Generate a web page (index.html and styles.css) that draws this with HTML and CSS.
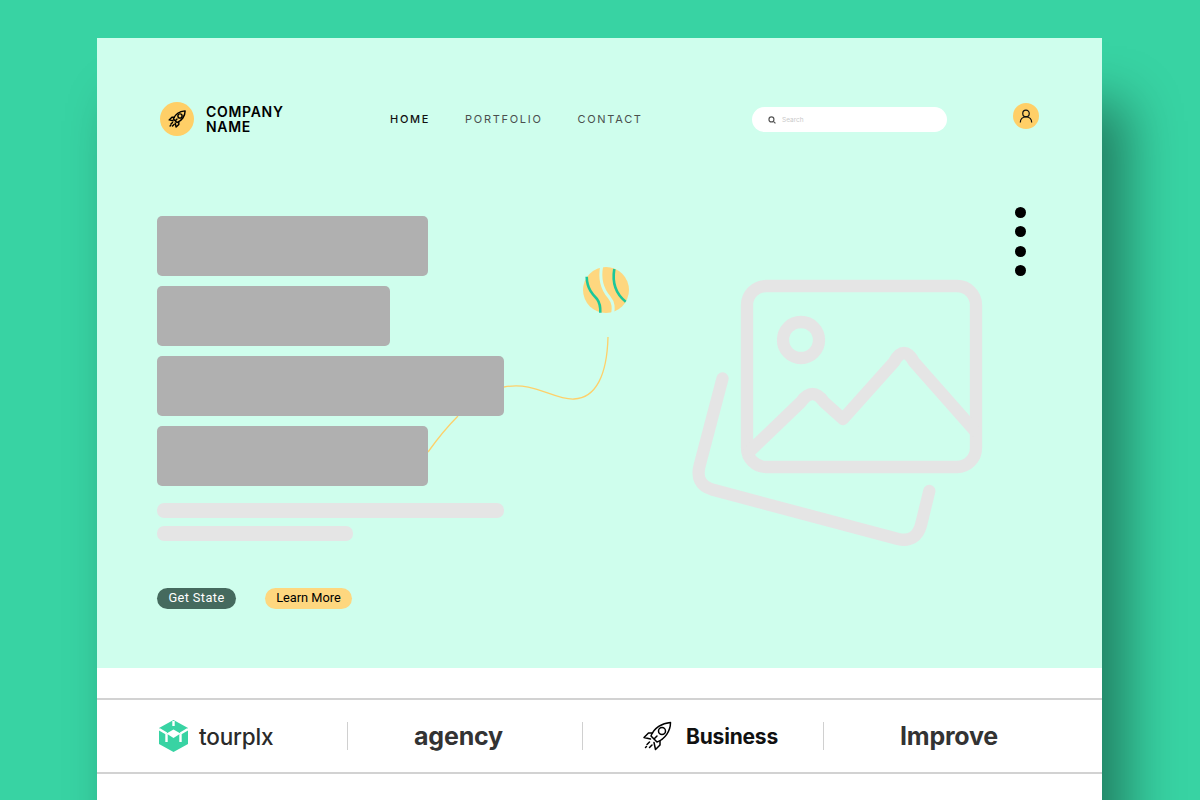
FILE: index.html
```html
<!DOCTYPE html>
<html lang="en">
<head>
    <meta charset="UTF-8">
    <title>Company Name</title>
    <link rel="stylesheet" href="styles.css">
</head>
<body>
    <svg class="defs" width="0" height="0">
        <symbol id="rocket" viewBox="0 0 30 30">
            <path d="M9 15C12 7 20 2 28.500 1.500C28.500 10 23 18 15 21Z"/>
            <circle cx="20" cy="10" r="3.500"/>
            <path d="M10.500 12H6.500L2 16.500L8.500 18M18 20V24L13.500 28.500L12 21.500M12.500 17.500L15 15M7.500 21L5 23.500M10 24L7.500 26.500M4.500 25.500L3.500 26.500"/>
        </symbol>
    </svg>

    <div class="sheet">
        <section class="hero">
            <!-- line art behind the content, drawn in page coordinates -->
            <svg class="art" viewBox="97 38 1005 630">
                <g class="photo">
                    <rect x="747" y="286" width="229" height="181" rx="19"/>
                    <circle cx="801" cy="340" r="18"/>
                    <path d="M749 452L801 402Q812.500 386 824 402L843 419L894 362Q904 344 914 362L975 431"/>
                    <path d="M722.500 378.500L699.500 466Q695 484 712 489.500L898 539Q916 543 921 525L929.300 491"/>
                </g>
                <g class="wire">
                    <path d="M504 387C535 381 553 400 574 399C596 398 607 375 608 337"/>
                    <path d="M458 416C447 427 438 438 428 452"/>
                </g>
                <circle class="ball" cx="606" cy="290" r="23"/>
                <path class="ball-gap" d="M601.700 266C599 280 603 290 609 297C614 303 613.500 308 612.700 314"/>
                <path class="ball-line" d="M586.700 276.700C587 289 593 295 597 299C600 303 600.500 308 600.300 312.700M614.300 269C612 283 616 294 625.700 301.700"/>
            </svg>

            <header class="topbar">
                <div class="brand">
                    <span class="brand-icon"><svg class="rocket" width="18" height="18"><use href="#rocket"/></svg></span>
                    <span class="brand-name">COMPANY<br>NAME</span>
                </div>
                <nav class="menu">
                    <a class="active" href="#">HOME</a>
                    <a href="#">PORTFOLIO</a>
                    <a href="#">CONTACT</a>
                </nav>
                <div class="search">
                    <svg width="8" height="8" viewBox="0 0 10 10"><circle cx="4.300" cy="4.300" r="3.100"/><path d="M6.700 6.700L9.300 9.300"/></svg>
                    <span>Search</span>
                </div>
                <span class="avatar">
                    <svg width="14" height="14" viewBox="0 0 16 16"><circle cx="8" cy="5" r="3.700"/><path d="M1.500 15.500C1.500 11.500 4 9 8 9S14.500 11.500 14.500 15.500"/></svg>
                </span>
            </header>

            <div class="dots"><i></i><i></i><i></i><i></i></div>

            <div class="blocks">
                <div class="block w271"></div>
                <div class="block w233"></div>
                <div class="block w347"></div>
                <div class="block w271"></div>
            </div>
            <div class="lines">
                <div class="line w347"></div>
                <div class="line w196"></div>
            </div>
            <div class="actions">
                <a class="btn btn-dark" href="#">Get State</a>
                <a class="btn btn-yellow" href="#">Learn More</a>
            </div>
        </section>

        <section class="partners">
            <div class="partner first">
                <svg width="29" height="32" viewBox="0 0 29 32">
                    <path class="hex" d="M14.500 0L29 8V24L14.500 32L0 24V8Z"/>
                    <path class="hex-fill" d="M14.500 9.500L21.500 13.500L14.500 18L7.500 13.500Z"/>
                    <path class="hex-cut" d="M0 9L7.500 13.500M29 9L21.500 13.500M7.500 13.500V22M21.500 13.500V22M14.500 1V6"/>
                </svg>
                <span class="tourplx">tourplx</span>
            </div>
            <div class="partner second"><span class="word">agency</span></div>
            <div class="partner third">
                <svg class="rocket rocket-big" width="30" height="30"><use href="#rocket"/></svg>
                <span class="word black">Business</span>
            </div>
            <div class="partner fourth"><span class="word">Improve</span></div>
        </section>
    </div>
</body>
</html>
```

FILE: styles.css
```css
html, body {
    margin: 0;
    height: 100%;
}
body {
    background-color: #38d3a3;
    font-family: Inter, "Liberation Sans", sans-serif;
    overflow: hidden;
    padding: 38px 98px 0 97px;
    box-sizing: border-box;
}
a {
    text-decoration: none;
    color: inherit;
}
.defs {
    position: absolute;
}
.sheet {
    background: #ffffff;
    height: 762px;
    box-shadow: 25px 65px 50px rgba(0, 0, 0, 0.4);
}

/* hero */
.hero {
    position: relative;
    background-color: #cffeed;
    height: 630px;
    box-sizing: border-box;
    padding: 64px 0 0 60px;
}
.art {
    position: absolute;
    left: 0;
    top: 0;
    width: 1005px;
    height: 630px;
    fill: none;
}
.photo {
    stroke: #e5e5e5;
    stroke-width: 12.3;
    stroke-linecap: round;
    stroke-linejoin: round;
}
.wire {
    stroke: #fed06a;
    stroke-width: 1.3;
}
.ball {
    fill: #fed77f;
}
.ball-gap {
    stroke: #cffeed;
    stroke-width: 3;
}
.ball-line {
    stroke: #1cc79a;
    stroke-width: 2.6;
}

/* top bar */
.topbar {
    position: relative;
    display: flex;
    align-items: center;
    height: 34px;
    padding-left: 3px;
}
.brand {
    display: flex;
    align-items: center;
    gap: 12px;
    width: 230px;
}
.brand-icon {
    width: 34px;
    height: 34px;
    border-radius: 50%;
    background: #ffcf67;
    display: flex;
    align-items: center;
    justify-content: center;
}
.rocket {
    fill: none;
    stroke: #000;
    stroke-width: 2.4;
    stroke-linejoin: round;
    stroke-linecap: round;
}
.brand-name {
    font-size: 14px;
    font-weight: 600;
    line-height: 15px;
    color: #000;
    letter-spacing: 0.7px;
    margin-top: -1px;
}
.menu {
    display: flex;
    gap: 35px;
    font-size: 11px;
    letter-spacing: 1.7px;
    color: #4a4f4d;
    width: 362px;
}
.menu .active {
    color: #111;
    font-weight: 500;
}
.search {
    width: 195px;
    height: 25px;
    border-radius: 13px;
    background: #fff;
    margin-top: 1px;
    display: flex;
    align-items: center;
    gap: 6px;
    box-sizing: border-box;
    padding-left: 16px;
    font-size: 6.500px;
    color: #c9c9c9;
}
.search svg {
    fill: none;
    stroke: #555;
    stroke-width: 1.5;
}
.avatar {
    width: 26px;
    height: 26px;
    border-radius: 50%;
    background: #ffcf67;
    margin: -6px 0 0 66px;
    display: flex;
    align-items: center;
    justify-content: center;
}
.avatar svg {
    fill: none;
    stroke: #111;
    stroke-width: 1.4;
}
.dots {
    position: absolute;
    left: 918px;
    top: 169px;
    display: flex;
    flex-direction: column;
    gap: 8.300px;
}
.dots i {
    width: 11px;
    height: 11px;
    border-radius: 50%;
    background: #000;
}

/* left column */
.blocks {
    position: relative;
    display: flex;
    flex-direction: column;
    gap: 10px;
    margin-top: 80px;
}
.block {
    height: 60px;
    border-radius: 5px;
    background: #b0b0b0;
}
.w271 { width: 271px; }
.w233 { width: 233px; }
.w347 { width: 347px; }
.w196 { width: 196px; }
.lines {
    position: relative;
    display: flex;
    flex-direction: column;
    gap: 8px;
    margin-top: 16.500px;
}
.line {
    height: 15px;
    border-radius: 7px;
    background: #e5e5e5;
}
.actions {
    position: relative;
    display: flex;
    gap: 29px;
    margin-top: 47px;
}
.btn {
    height: 21px;
    border-radius: 11px;
    display: flex;
    align-items: center;
    justify-content: center;
    font-family: Roboto, "Liberation Sans", sans-serif;
    font-size: 12.800px;
    padding-bottom: 1px;
    box-sizing: border-box;
}
.btn-dark {
    width: 79px;
    background: #456a5e;
    color: #fff;
    letter-spacing: 0.4px;
}
.btn-yellow {
    width: 87px;
    background: #fed77f;
    color: #000;
}

/* logos strip */
.partners {
    display: flex;
    align-items: center;
    height: 72px;
    margin-top: 30px;
    border-top: 2px solid #d2d2d2;
    border-bottom: 2px solid #d2d2d2;
}
.partner {
    display: flex;
    align-items: center;
    justify-content: center;
    height: 28px;
    box-sizing: border-box;
    border-right: 1.500px solid #d0d0d0;
}
.first {
    width: 251px;
    padding-left: 62px;
    justify-content: flex-start;
    gap: 11px;
}
.second {
    width: 235px;
    padding-right: 13px;
}
.third {
    width: 241px;
    gap: 14px;
    padding-left: 14px;
}
.fourth {
    width: 250px;
    border-right: none;
}
.hex {
    fill: #38d3a3;
}
.hex-fill {
    fill: #fff;
}
.hex-cut {
    fill: none;
    stroke: #fff;
    stroke-width: 2.400;
}
.rocket-big {
    stroke-width: 1.500;
}
.tourplx {
    font-size: 22.500px;
    font-weight: 500;
    color: #2a2a2a;
    letter-spacing: -0.2px;
}
.word {
    font-size: 25px;
    font-weight: 700;
    color: #333;
    letter-spacing: -0.2px;
}
.black {
    font-size: 21px;
    color: #111;
}
```
